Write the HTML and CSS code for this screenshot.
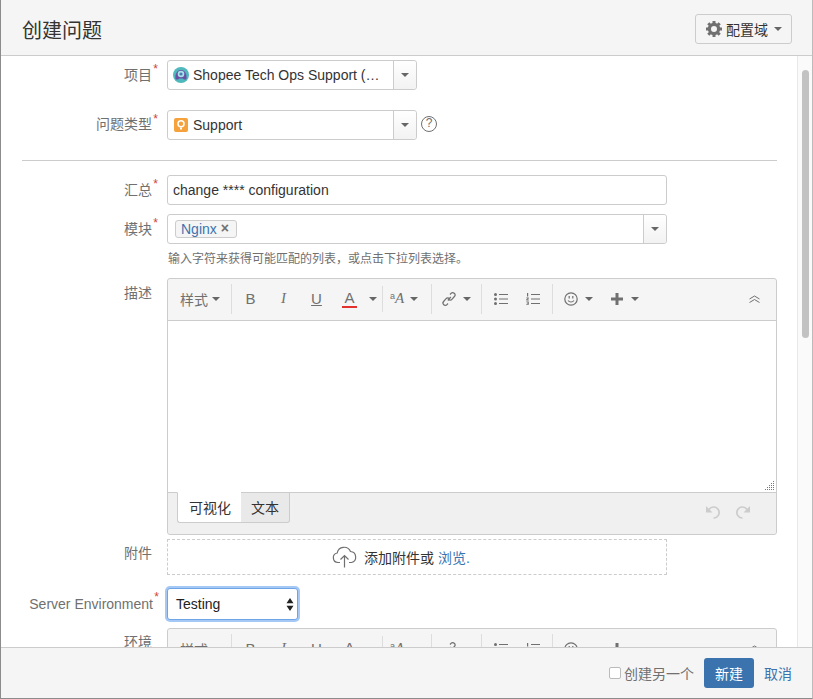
FILE: index.html
```html
<!DOCTYPE html>
<html lang="zh">
<head>
  <meta charset="UTF-8">
  <meta name="viewport" content="width=device-width, initial-scale=1.0">
  <title>创建问题</title>
  <link rel="stylesheet" href="styles.css">
</head>
<body>
  <div class="dialog">
    <header class="dialog-head">
      <h2>创建问题</h2>
      <button class="config-btn">
        <svg class="gear" width="16" height="16" viewBox="0 0 16 16"><circle cx="8" cy="8" r="4.6" fill="none" stroke="#707070" stroke-width="3.2"/><g stroke="#707070" stroke-width="3"><path d="M8 0v3M8 13v3M0 8h3M13 8h3M2.3 2.3l2.2 2.2M11.5 11.5l2.2 2.2M13.7 2.3l-2.2 2.2M4.5 11.5l-2.2 2.2"/></g></svg>
        配置域<span class="caret"></span>
      </button>
    </header>

    <div class="dialog-body">
      <div class="form">
        <div class="row row-project">
          <label>项目<em>*</em></label>
          <div class="picker">
            <svg class="pic" width="16" height="16" viewBox="0 0 16 16"><circle cx="8" cy="8" r="8" fill="#4fb8bd"/><path d="M2.5 12c-.5-5 1.500-9 5.500-9s6 4 5.500 9c-1.500 1-3 .5-3.500-.5h-4c-.5 1-2 1.500-3.500.5z" fill="#6a4fa3"/><circle cx="8" cy="7" r="3.300" fill="#a9e0ea"/><circle cx="8" cy="7" r="1.600" fill="#4a7fb5"/></svg>
            <span class="picker-text">Shopee Tech Ops Support (…</span>
            <span class="picker-drop"><span class="caret"></span></span>
          </div>
        </div>
        <div class="row row-type">
          <label>问题类型<em>*</em></label>
          <div class="picker">
            <svg class="pic" width="14" height="14" viewBox="0 0 14 14"><rect width="14" height="14" rx="2" fill="#f5a13c"/><circle cx="7" cy="5.800" r="3" fill="none" stroke="#fff" stroke-width="1.500"/><path d="M6 9.500h2v2H6z" fill="#fff"/></svg>
            <span class="picker-text">Support</span>
            <span class="picker-drop"><span class="caret"></span></span>
          </div>
          <span class="help">?</span>
        </div>

        <hr class="sep">

        <div class="row row-summary">
          <label>汇总<em>*</em></label>
          <div class="field">change **** configuration</div>
        </div>
        <div class="row row-module">
          <label>模块<em>*</em></label>
          <div class="field field-multi">
            <span class="tag">Nginx<i>×</i></span>
            <span class="picker-drop"><span class="caret"></span></span>
          </div>
        </div>
        <div class="hint">输入字符来获得可能匹配的列表，或点击下拉列表选择。</div>

        <div class="row row-desc">
          <label>描述</label>
          <div class="editor">
            <div class="toolbar">
              <span class="tb-style">样式<span class="caret"></span></span>
              <span class="tb-div"></span>
              <span class="tb-letters">
                <b>B</b><i>I</i><u>U</u><span class="tb-a"><span class="tb-color">A</span></span>
              </span>
              <span class="caret caret-color"></span>
              <span class="tb-div tb-div-short"></span>
              <span class="tb-size"><sup>a</sup><i>A</i><span class="caret"></span></span>
              <span class="tb-div"></span>
              <span class="tb-link">
                <svg width="16" height="16" viewBox="0 0 16 16" fill="none" stroke="#707070" stroke-width="1.200"><path d="M6.800 9.500l3-3.500"/><path d="M9 3.500l1-1.100a2.300 2.300 0 0 1 3.400 3.100l-2.500 2.800a2.300 2.300 0 0 1-3.300.2"/><path d="M7 12.500l-1 1.100a2.300 2.300 0 0 1-3.400-3.100l2.500-2.800a2.300 2.300 0 0 1 3.300-.2"/></svg>
                <span class="caret"></span>
              </span>
              <span class="tb-div"></span>
              <svg class="tb-list" width="14" height="12" viewBox="0 0 14 12" fill="#707070"><circle cx="1.500" cy="1.500" r="1.500"/><circle cx="1.500" cy="6" r="1.500"/><circle cx="1.500" cy="10.500" r="1.500"/><path d="M5 1h9v1H5zM5 5.500h9v1H5zM5 10h9v1H5z"/></svg>
              <svg class="tb-list tb-num" width="14" height="12" viewBox="0 0 14 12" fill="#707070"><path d="M1 0h1.200v3.500H1zM.3 4.500h2.500v1.100l-1.500 1h1.500v.8H.3V6.300l1.500-1H.3zM.3 8.500h2.500v3.200H.3v-.8h1.500v-.4H.8v-.7h1v-.5H.3zM5 1h9v1H5zM5 5.500h9v1H5zM5 10h9v1H5z"/></svg>
              <span class="tb-div tb-div-emoji"></span>
              <span class="tb-emoji">
                <svg width="14" height="14" viewBox="0 0 14 14" fill="none" stroke="#707070" stroke-width="1.200"><circle cx="7" cy="7" r="6.200"/><path d="M5.200 4v2.500M8.800 4v2.500M4 8.500c1.500 2 4.500 2 6 0"/></svg>
                <span class="caret"></span>
              </span>
              <span class="tb-plus">
                <svg width="12" height="12" viewBox="0 0 12 12" fill="#707070"><path d="M4.500 0h3v4.500H12v3H7.500V12h-3V7.500H0v-3h4.500z"/></svg>
                <span class="caret"></span>
              </span>
              <svg class="tb-collapse" width="11" height="8" viewBox="0 0 11 8" fill="none" stroke="#707070"><path d="M.5 4l5-3 5 3M.5 7.500l5-3 5 3"/></svg>
            </div>
            <div class="editor-area">
              <svg class="grip" width="11" height="11" viewBox="0 0 11 11" fill="#777"><path d="M9 1h1v1H9zM7 3h1v1H7zM9 3h1v1H9zM5 5h1v1H5zM7 5h1v1H7zM9 5h1v1H9zM3 7h1v1H3zM5 7h1v1H5zM7 7h1v1H7zM9 7h1v1H9zM1 9h1v1H1zM3 9h1v1H3zM5 9h1v1H5zM7 9h1v1H7zM9 9h1v1H9z"/></svg>
            </div>
            <div class="editor-foot">
              <span class="tab tab-on">可视化</span>
              <span class="tab">文本</span>
              <span class="undo">
                <svg width="16" height="15" viewBox="0 0 16 15"><path d="M4 5.500A5.500 5.500 0 1 1 8.500 14" fill="none" stroke="#ccc" stroke-width="1.700"/><path d="M1 2v6.500h6.500z" fill="#ccc"/></svg>
                <svg width="16" height="15" viewBox="0 0 16 15"><path d="M12 5.500A5.500 5.500 0 1 0 7.500 14" fill="none" stroke="#ccc" stroke-width="1.700"/><path d="M15 2v6.500H8.500z" fill="#ccc"/></svg>
              </span>
            </div>
          </div>
        </div>

        <div class="row row-attach">
          <label>附件</label>
          <div class="dropzone">
            <svg width="26" height="22" viewBox="0 0 26 22" fill="none" stroke="#707070" stroke-width="1.200"><path d="M8 16.500H6a4.800 4.800 0 0 1-.8-9.500A7 7 0 0 1 18.500 5.500a5.600 5.600 0 0 1 1 11H17"/><path d="M12.500 21.500V10M8.500 13.500l4-4 4 4"/></svg>
            <span>添加附件或 <a href="#">浏览.</a></span>
          </div>
        </div>

        <div class="row row-env">
          <label>Server Environment<em>*</em></label>
          <div class="env-select">
            Testing
            <svg width="8" height="13" viewBox="0 0 8 13" fill="#222"><path d="M4 0l3.500 5.300h-7zM4 13L.5 7.700h7z"/></svg>
          </div>
        </div>

        <div class="row row-env2">
          <label>环境</label>
          <div class="editor">
            <div class="toolbar">
              <span class="tb-style">样式<span class="caret"></span></span>
              <span class="tb-div"></span>
              <span class="tb-letters">
                <b>B</b><i>I</i><u>U</u><span class="tb-a"><span class="tb-color">A</span></span>
              </span>
              <span class="caret caret-color"></span>
              <span class="tb-div tb-div-short"></span>
              <span class="tb-size"><sup>a</sup><i>A</i><span class="caret"></span></span>
              <span class="tb-div"></span>
              <span class="tb-link">
                <svg width="16" height="16" viewBox="0 0 16 16" fill="none" stroke="#707070" stroke-width="1.200"><path d="M6.800 9.500l3-3.500"/><path d="M9 3.500l1-1.100a2.300 2.300 0 0 1 3.400 3.100l-2.500 2.800a2.300 2.300 0 0 1-3.300.2"/><path d="M7 12.500l-1 1.100a2.300 2.300 0 0 1-3.400-3.100l2.500-2.800a2.300 2.300 0 0 1 3.300-.2"/></svg>
                <span class="caret"></span>
              </span>
              <span class="tb-div"></span>
              <svg class="tb-list" width="14" height="12" viewBox="0 0 14 12" fill="#707070"><circle cx="1.500" cy="1.500" r="1.500"/><circle cx="1.500" cy="6" r="1.500"/><circle cx="1.500" cy="10.500" r="1.500"/><path d="M5 1h9v1H5zM5 5.500h9v1H5zM5 10h9v1H5z"/></svg>
              <svg class="tb-list tb-num" width="14" height="12" viewBox="0 0 14 12" fill="#707070"><path d="M1 0h1.200v3.500H1zM5 1h9v1H5zM5 5.500h9v1H5zM5 10h9v1H5z"/></svg>
              <span class="tb-div tb-div-emoji"></span>
              <span class="tb-emoji">
                <svg width="14" height="14" viewBox="0 0 14 14" fill="none" stroke="#707070" stroke-width="1.200"><circle cx="7" cy="7" r="6.200"/><path d="M5.200 4v2.500M8.800 4v2.500M4 8.500c1.500 2 4.500 2 6 0"/></svg>
                <span class="caret"></span>
              </span>
              <span class="tb-plus">
                <svg width="12" height="12" viewBox="0 0 12 12" fill="#707070"><path d="M4.500 0h3v4.500H12v3H7.500V12h-3V7.500H0v-3h4.500z"/></svg>
                <span class="caret"></span>
              </span>
              <svg class="tb-collapse" width="11" height="8" viewBox="0 0 11 8" fill="none" stroke="#707070"><path d="M.5 4l5-3 5 3M.5 7.500l5-3 5 3"/></svg>
            </div>
          </div>
        </div>
      </div>

      <div class="scrollbar"><div class="thumb"></div></div>
    </div>

    <footer class="dialog-foot">
      <label class="another"><span class="check"></span>创建另一个</label>
      <button class="btn-primary">新建</button>
      <a class="cancel" href="#">取消</a>
    </footer>
  </div>
</body>
</html>
```

FILE: styles.css
```css
* {
  box-sizing: border-box;
}

html, body {
  height: 100%;
}

body {
  margin: 0;
  font-family: "Liberation Sans", "Noto Sans CJK SC", sans-serif;
  font-size: 14px;
  color: #333;
  background: #fff;
  overflow: hidden;
}

.dialog {
  height: 699px;
  display: flex;
  flex-direction: column;
  border-left: 1px solid #8c8c8c;
  border-right: 1px solid #bbb;
  border-bottom: 1px solid #8c8c8c;
}

.dialog-head {
  height: 56px;
  flex: none;
  display: flex;
  align-items: center;
  justify-content: space-between;
  padding: 3px 20px 0 21px;
  background: #f5f5f5;
  border-bottom: 1px solid #ccc;
}

.dialog-head .config-btn {
  margin-top: -1px;
}

h2 {
  margin: 0;
  font-size: 20px;
  font-weight: 400;
  color: #333;
}

.config-btn {
  display: flex;
  align-items: center;
  height: 30px;
  width: 97px;
  padding: 0 0 0 10px;
  font: inherit;
  color: #333;
  background: #f5f5f5;
  border: 1px solid #ccc;
  border-radius: 3px;
}

.gear {
  margin-right: 4px;
}

.config-btn .caret {
  margin-left: 6px;
}

.caret {
  display: inline-block;
  flex: none;
  width: 0;
  height: 0;
  border-left: 4px solid transparent;
  border-right: 4px solid transparent;
  border-top: 4px solid #666;
}

.dialog-body {
  flex: 1;
  min-height: 0;
  display: flex;
  overflow: hidden;
}

.form {
  width: 796px;
  flex: none;
  padding: 4px 0 0 0;
  height: 100%;
  overflow: hidden;
}

.scrollbar {
  width: 15px;
  flex: none;
  background: #fafafa;
  border-left: 1px solid #e8e8e8;
  padding: 14px 3px 0 4px;
}

.thumb {
  height: 268px;
  background: #c2c2c2;
  border-radius: 4px;
}

.row {
  display: flex;
  align-items: flex-start;
}

.row > label {
  width: 151px;
  flex: none;
  padding-top: 5px;
  line-height: 20px;
  text-align: right;
  color: #707070;
  position: relative;
}

.row > label em {
  position: absolute;
  right: -6px;
  top: -1px;
  font-style: normal;
  font-size: 12px;
  color: #d04437;
}

.row > :not(label) {
  margin-left: 15px;
}

.row-type {
  margin-top: 20px;
}

.row-type > label {
  padding-top: 4px;
}

.picker {
  width: 250px;
  height: 30px;
  display: flex;
  align-items: center;
  background: #fff;
  border: 1px solid #ccc;
  border-radius: 3px;
  padding-left: 5px;
}

.picker-text {
  flex: 1;
  margin-left: 4px;
  white-space: nowrap;
}

.row-type .pic {
  margin-left: 1px;
}

.row-type .picker-text {
  margin-left: 5px;
}

.picker-drop {
  width: 23px;
  height: 100%;
  flex: none;
  display: flex;
  align-items: center;
  justify-content: center;
  background: linear-gradient(#fff, #f2f2f2);
  border-left: 1px solid #ccc;
  border-radius: 0 3px 3px 0;
}

.row > .help {
  width: 16px;
  height: 16px;
  margin: 6px 0 0 4px;
  border: 1.5px solid #707070;
  border-radius: 50%;
  font-size: 12px;
  line-height: 13px;
  text-align: center;
  color: #707070;
}

.sep {
  height: 1px;
  margin: 20px 20px 14px 21px;
  border: 0;
  background: #ccc;
}

.field {
  width: 500px;
  height: 30px;
  line-height: 28px;
  padding: 0 5px;
  background: #fff;
  border: 1px solid #ccc;
  border-radius: 3px;
}

.row-module {
  margin-top: 9px;
}

.field-multi {
  display: flex;
  align-items: center;
  justify-content: space-between;
  padding: 0 0 0 7px;
}

.tag {
  width: 62px;
  height: 18px;
  display: flex;
  align-items: center;
  padding: 0 0 0 5px;
  color: #3b73af;
  line-height: 16px;
  background: #f5f5f5;
  border: 1px solid #ccc;
  border-radius: 3px;
}

.tag i {
  margin-left: 4px;
  margin-top: -2px;
  font-style: normal;
  font-weight: 700;
  color: #707070;
}

.hint {
  margin: 7px 0 0 167px;
  font-size: 12px;
  line-height: 16px;
  color: #707070;
}

.row-desc {
  margin-top: 11px;
}

.editor {
  width: 610px;
  background: #f0f0f0;
  border: 1px solid #ccc;
  border-radius: 3px;
}

.toolbar {
  height: 42px;
  display: flex;
  align-items: center;
  padding: 0 0 2px 12px;
  color: #707070;
  background: #f5f5f5;
  border-bottom: 1px solid #ccc;
  border-radius: 3px 3px 0 0;
  position: relative;
}

.tb-style {
  width: 41px;
  display: flex;
  align-items: center;
  flex: none;
}

.tb-style .caret {
  margin-left: 4px;
}

.tb-div {
  width: 1px;
  height: 30px;
  flex: none;
  background: #ddd;
  margin-left: 10px;
}

.tb-letters {
  display: flex;
  width: 134px;
  flex: none;
  padding-left: 2px;
  align-items: center;
  font-size: 15px;
}

.tb-letters > * {
  width: 33px;
  flex: none;
  text-align: center;
  font-weight: 400;
}

.tb-letters i {
  font-family: "Liberation Serif", serif;
}

.tb-color {
  display: inline-block;
  width: 15px;
  border-bottom: 2px solid #e3322e;
  line-height: 17px;
}

.caret-color {
  margin-left: 3px;
}

.tb-div-short {
  height: 26px;
  margin-left: 5px;
}

.tb-size {
  display: flex;
  align-items: center;
  width: 48px;
  flex: none;
  padding-left: 7px;
  color: #707070;
}

.tb-size sup {
  font-size: 9px;
  line-height: 10px;
  margin-top: -6px;
}

.tb-size i {
  font-size: 15px;
  margin-right: 6px;
  font-family: "Liberation Serif", serif;
}

.tb-link {
  display: flex;
  align-items: center;
  width: 49px;
  flex: none;
  padding-left: 9px;
}

.tb-link .caret {
  margin-left: 6px;
}

.tb-size + .tb-div,
.tb-link + .tb-div {
  margin-left: 0;
}

.tb-list {
  flex: none;
  margin-left: 12px;
}

.toolbar .tb-num {
  margin-left: 18px;
}

.tb-div-emoji {
  margin-left: 12px;
}

.tb-emoji {
  display: flex;
  align-items: center;
  margin-left: 11px;
}

.tb-emoji .caret {
  margin-left: 7px;
}

.tb-plus {
  display: flex;
  align-items: center;
  margin-left: 18px;
}

.tb-plus .caret {
  margin-left: 8px;
}

.tb-collapse {
  position: absolute;
  right: 16px;
  top: 16px;
}

.editor-area {
  height: 172px;
  background: #fff;
  border-bottom: 1px solid #ccc;
  position: relative;
}

.grip {
  position: absolute;
  right: 1px;
  bottom: 1px;
}

.editor-foot {
  height: 41px;
  display: flex;
  align-items: flex-start;
  padding-left: 9px;
  background: #f0f0f0;
  border-radius: 0 0 3px 3px;
  position: relative;
}

.tab {
  height: 31px;
  margin-top: -1px;
  padding: 0 10px;
  line-height: 30px;
  color: #333;
  background: #e9e9e9;
  border: 1px solid #ccc;
  border-left: 0;
  border-radius: 0 0 3px 0;
}

.tab-on {
  padding: 0 10px 0 11px;
  background: #fff;
  border-left: 1px solid #ccc;
  border-right: 0;
  border-top-color: #fff;
  border-radius: 0 0 0 3px;
}

.undo {
  position: absolute;
  right: 25px;
  top: 11px;
  display: flex;
  gap: 14px;
}

.row-attach {
  margin-top: 4px;
}

.row-attach > label {
  padding-top: 4px;
}

.dropzone {
  width: 500px;
  height: 36px;
  display: flex;
  align-items: center;
  justify-content: center;
  gap: 6px;
  padding-right: 32px;
  background: #fff;
  border: 1px dashed #ccc;
}

.dropzone a, .cancel {
  color: #3b73af;
  text-decoration: none;
}

.row-env {
  margin-top: 13px;
}

.row-env > label {
  width: 152px;
  padding-top: 6px;
}

.row-env > .env-select {
  margin-left: 14px;
}

.env-select {
  width: 131px;
  height: 32px;
  display: flex;
  align-items: center;
  justify-content: space-between;
  padding: 0 3px 0 8px;
  color: #222;
  background: #fff;
  border: 1px solid #6ea4e8;
  border-radius: 3px;
  box-shadow: 0 0 0 2px #a6c8f5;
}

.row-env2 {
  margin-top: 8px;
}

.row-env2 > label {
  padding-top: 4px;
}

.dialog-foot {
  height: 51px;
  flex: none;
  display: flex;
  align-items: center;
  justify-content: flex-end;
  padding: 0 20px 0 0;
  background: #f5f5f5;
  border-top: 1px solid #ccc;
}

.another {
  display: flex;
  align-items: center;
  color: #707070;
}

.check {
  width: 12px;
  height: 12px;
  margin-right: 3px;
  background: #fff;
  border: 1px solid #bbb;
  border-radius: 2px;
}

.btn-primary {
  width: 50px;
  height: 30px;
  margin-left: 10px;
  font: inherit;
  color: #fff;
  background: #3b73af;
  border: 0;
  border-radius: 3px;
}

.cancel {
  margin-left: 10px;
}
```
